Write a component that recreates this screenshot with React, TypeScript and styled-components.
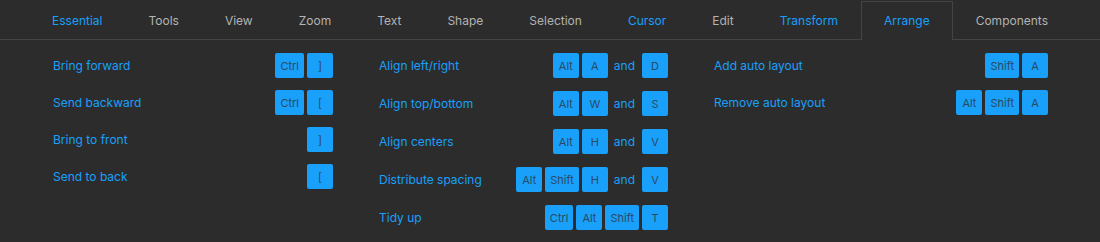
import React from "react";
import styled, { createGlobalStyle } from "styled-components";

const Global = createGlobalStyle`
  html, body { margin: 0; padding: 0; background: #2c2c2c; }
  body { font-family: Inter, "Noto Sans", sans-serif; }
`;

const Panel = styled.div`
  width: 1100px;
  height: 242px;
  background: #2c2c2c;
  overflow: hidden;
`;

const TabBar = styled.div`
  display: flex;
  height: 39px;
  padding-left: 29px;
  border-bottom: 1px solid #444444;
`;

const Tab = styled.div<{ $active?: boolean; $blue?: boolean }>`
  display: flex;
  align-items: center;
  box-sizing: border-box;
  height: 39px;
  margin-top: 1px;
  margin-bottom: -1px;
  padding: 0 22px 1px;
  font-size: 12px;
  color: ${(p) => (p.$blue ? "#18a0fb" : "#b3b3b3")};
  border: 1px solid ${(p) => (p.$active ? "#444444" : "transparent")};
  border-bottom: none;
  background: ${(p) => (p.$active ? "#2c2c2c" : "transparent")};
`;

const Body = styled.div`
  display: grid;
  grid-template-columns: 280px 289px 334px;
  column-gap: 46px;
  padding: 13px 0 0 53px;
`;

const Column = styled.div<{ $gap: number }>`
  display: flex;
  flex-direction: column;
  gap: ${(p) => p.$gap}px;
`;

const Row = styled.div`
  display: flex;
  align-items: center;
  justify-content: space-between;
  height: 25px;
`;

const Label = styled.span`
  font-size: 12px;
  color: #18a0fb;
`;

const Keys = styled.div`
  display: flex;
  align-items: center;
  gap: 3px;
`;

const Key = styled.span`
  display: inline-flex;
  align-items: center;
  justify-content: center;
  box-sizing: border-box;
  height: 25px;
  min-width: 26px;
  padding: 0 5px;
  border-radius: 2px;
  background: #18a0fb;
  color: #2b4a61;
  font-size: 11px;
`;

const And = styled.span`
  font-size: 12px;
  color: #18a0fb;
  margin: 0 4px 0 3px;
`;

type Item = { label: string; keys: (string | null)[] };

const tabs: { name: string; blue?: boolean; active?: boolean }[] = [
  { name: "Essential", blue: true },
  { name: "Tools" },
  { name: "View" },
  { name: "Zoom" },
  { name: "Text" },
  { name: "Shape" },
  { name: "Selection" },
  { name: "Cursor", blue: true },
  { name: "Edit" },
  { name: "Transform", blue: true },
  { name: "Arrange", blue: true, active: true },
  { name: "Components" },
];

const columns: { gap: number; items: Item[] }[] = [
  {
    gap: 12,
    items: [
      { label: "Bring forward", keys: ["Ctrl", "]"] },
      { label: "Send backward", keys: ["Ctrl", "["] },
      { label: "Bring to front", keys: ["]"] },
      { label: "Send to back", keys: ["["] },
    ],
  },
  {
    gap: 13,
    items: [
      { label: "Align left/right", keys: ["Alt", "A", null, "D"] },
      { label: "Align top/bottom", keys: ["Alt", "W", null, "S"] },
      { label: "Align centers", keys: ["Alt", "H", null, "V"] },
      { label: "Distribute spacing", keys: ["Alt", "Shift", "H", null, "V"] },
      { label: "Tidy up", keys: ["Ctrl", "Alt", "Shift", "T"] },
    ],
  },
  {
    gap: 12,
    items: [
      { label: "Add auto layout", keys: ["Shift", "A"] },
      { label: "Remove auto layout", keys: ["Alt", "Shift", "A"] },
    ],
  },
];

export default function App() {
  return (
    <Panel>
      <Global />
      <TabBar>
        {tabs.map((t) => (
          <Tab key={t.name} $blue={t.blue} $active={t.active}>
            {t.name}
          </Tab>
        ))}
      </TabBar>
      <Body>
        {columns.map((col, ci) => (
          <Column key={ci} $gap={col.gap}>
            {col.items.map((it) => (
              <Row key={it.label}>
                <Label>{it.label}</Label>
                <Keys>
                  {it.keys.map((k, i) =>
                    k === null ? <And key={i}>and</And> : <Key key={i}>{k}</Key>
                  )}
                </Keys>
              </Row>
            ))}
          </Column>
        ))}
      </Body>
    </Panel>
  );
}
